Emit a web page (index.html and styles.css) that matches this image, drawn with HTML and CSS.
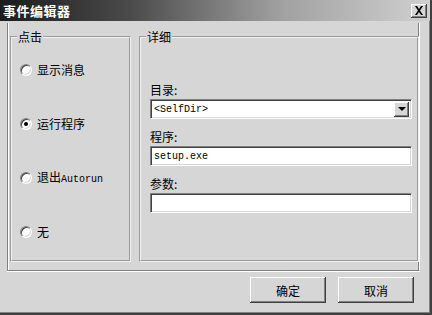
FILE: index.html
```html
<!DOCTYPE html>
<html lang="zh">
<head>
<meta charset="UTF-8" />
<title>事件编辑器</title>
<link rel="stylesheet" href="styles.css">
</head>
<body>

<div class="window">
  <div class="titlebar">
    <span class="title">事件编辑器</span>
    <span class="close-btn">
      <svg width="10" height="9" viewBox="0 0 10 9"><path d="M1 0h2l2 3 2-3h2L6 4.5 9 9H7L5 6 3 9H1l3-4.5z" fill="#000"/></svg>
    </span>
  </div>

  <div class="panel">
    <fieldset class="group group-click">
      <legend>点击</legend>
      <div class="radios">
        <label class="radio"><span class="dot"></span><span>显示消息</span></label>
        <label class="radio"><span class="dot checked"></span><span>运行程序</span></label>
        <label class="radio"><span class="dot"></span><span>退出<span class="mono">Autorun</span></span></label>
        <label class="radio"><span class="dot"></span><span>无</span></label>
      </div>
    </fieldset>

    <fieldset class="group group-detail">
      <legend>详细</legend>
      <div class="fields">
        <div class="field">
          <div class="label">目录:</div>
          <div class="select">
            <span class="mono">&lt;SelfDir&gt;</span>
            <span class="drop-btn"><span class="arrow"></span></span>
          </div>
        </div>
        <div class="field">
          <div class="label">程序:</div>
          <div class="input"><span class="mono">setup.exe</span></div>
        </div>
        <div class="field">
          <div class="label">参数:</div>
          <div class="input"></div>
        </div>
      </div>
    </fieldset>
  </div>

  <div class="buttons">
    <button class="btn">确定</button>
    <button class="btn">取消</button>
  </div>
</div>

</body>
</html>
```

FILE: styles.css
```css
body {
  margin: 0;
  background: #d6d6d6;
  font-family: "Noto Sans CJK SC", "Noto Sans", sans-serif;
  font-size: 12px;
  color: #000;
}
.window {
  width: 432px;
  height: 315px;
  box-sizing: border-box;
  background: #d6d6d6;
  border-right: 2px solid #404040;
  border-bottom: 2px solid #404040;
  box-shadow: inset -1px -1px 0 #808080;
}

/* Title bar */
.titlebar {
  height: 21px;
  display: flex;
  align-items: center;
  justify-content: space-between;
  padding: 0 3px 0 3px;
  background: linear-gradient(to right, #1c1c1c 0%, #4a4a4a 30%, #a0a0a0 65%, #d0d0d0 100%);
}
.title {
  color: #fff;
  font-weight: bold;
  font-size: 13px;
  line-height: 14px;
  letter-spacing: 0.5px;
}
.close-btn {
  width: 16px;
  height: 14px;
  display: flex;
  align-items: center;
  justify-content: center;
  background: #d6d6d6;
  box-shadow: inset -1px -1px 0 #404040, inset 1px 1px 0 #fff, inset -2px -2px 0 #808080;
}

/* Outer etched panel */
.panel {
  margin: 2px 10px 0 7px;
  height: 248px;
  box-sizing: border-box;
  border-left: 1px solid #808080;
  border-right: 1px solid #fff;
  border-bottom: 1px solid #808080;
  box-shadow: inset 1px 0 0 #fff, inset -1px 0 0 #808080, 0 1px 0 #fff;
  display: flex;
  gap: 8px;
  padding: 7px 0 0 2px;
}

/* Group boxes */
.group {
  margin: 0;
  padding: 0;
  height: 232px;
  box-sizing: border-box;
  border: 2px groove #f0f0f0;
}
.group legend {
  padding: 0 1px;
  margin-left: 5px;
  line-height: 14px;
}
.group-click {
  width: 121px;
}
.group-detail {
  width: 280px;
}
.radios {
  padding: 19px 0 0 8px;
  display: flex;
  flex-direction: column;
  gap: 40px;
}
.fields {
  padding: 0 5px 0 9px;
}

/* Radios */
.radio {
  display: flex;
  align-items: center;
  gap: 5px;
  height: 14px;
  line-height: 14px;
}
.dot {
  width: 12px;
  height: 12px;
  border-radius: 50%;
  box-sizing: border-box;
  background: #fff;
  border: 1px solid;
  border-color: #808080 #fff #fff #808080;
  box-shadow: inset 1px 1px 0 #404040, inset -1px -1px 0 #d6d6d6;
  position: relative;
}
.dot.checked::after {
  content: "";
  position: absolute;
  left: 3px;
  top: 3px;
  width: 4px;
  height: 4px;
  border-radius: 50%;
  background: #000;
}
.mono {
  font-family: "Liberation Mono", monospace;
  font-size: 10px;
}

/* Fields */
.field {
  margin-top: 11px;
}
.field:first-child {
  margin-top: 39px;
}
.label {
  line-height: 14px;
  margin-bottom: 2px;
}
.select, .input {
  height: 20px;
  box-sizing: border-box;
  background: #fff;
  border: 1px solid;
  border-color: #808080 #fff #fff #808080;
  box-shadow: inset 1px 1px 0 #404040, inset -1px -1px 0 #d6d6d6;
  display: flex;
  align-items: center;
  padding: 0 3px;
}
.select {
  justify-content: space-between;
  padding-right: 2px;
}
.drop-btn {
  width: 15px;
  height: 15px;
  box-sizing: border-box;
  background: #d6d6d6;
  box-shadow: inset -1px -1px 0 #404040, inset 1px 1px 0 #fff, inset -2px -2px 0 #808080;
  display: flex;
  align-items: center;
  justify-content: center;
}
.arrow {
  width: 0;
  height: 0;
  border-left: 4px solid transparent;
  border-right: 4px solid transparent;
  border-top: 4px solid #000;
}

/* Buttons */
.buttons {
  display: flex;
  justify-content: flex-end;
  gap: 12px;
  padding: 6px 16px 0 0;
}
.btn {
  width: 76px;
  height: 26px;
  font-family: "Noto Sans CJK SC", sans-serif;
  font-size: 12px;
  background: #d6d6d6;
  border: none;
  box-shadow: inset -1px -1px 0 #404040, inset 1px 1px 0 #fff, inset -2px -2px 0 #808080;
  padding: 0;
}
```
